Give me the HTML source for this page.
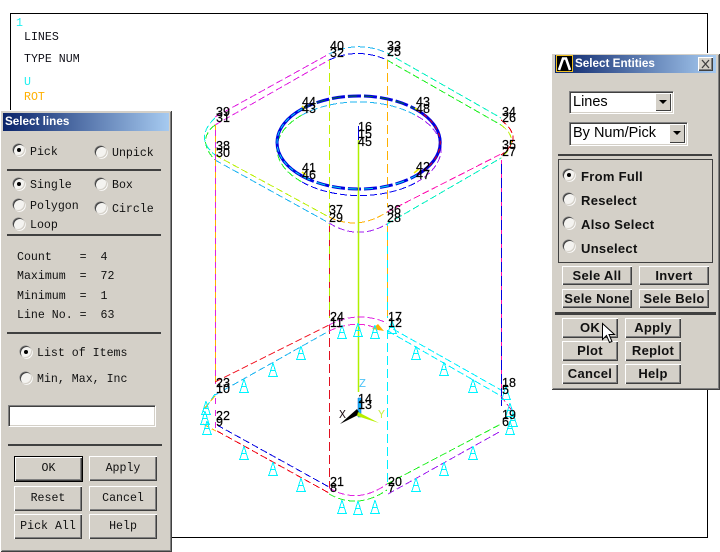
<!DOCTYPE html>
<html><head><meta charset="utf-8">
<style>
html,body{margin:0;padding:0;background:#fff;}
body{width:720px;height:552px;position:relative;overflow:hidden;}
.a{position:absolute;}
.p{position:absolute;background:#d4d0c8;box-shadow:inset 1px 1px 0 #fff,inset -1px -1px 0 #404040,inset 2px 2px 0 #d4d0c8,inset -2px -2px 0 #808080;}
.t{position:absolute;white-space:pre;line-height:12px;height:12px;}
.m{font:11.6px "Liberation Mono",monospace;color:#111;}
.s{font:bold 13px "Liberation Sans",sans-serif;color:#111;letter-spacing:.3px;}
.h{position:absolute;background:#404040;}
.r{position:absolute;width:12px;height:12px;border-radius:50%;background:#f4f3f0;box-shadow:inset 1px 1px 0 #404040,inset -1px -1px 0 #d4d0c8,-.5px -.5px 0 #808080,.7px .7px 0 #fff;}
.r.on:after{content:"";position:absolute;left:4px;top:4px;width:4px;height:4px;border-radius:50%;background:#000;}
.b{position:absolute;background:#d4d0c8;text-align:center;box-shadow:inset 1px 1px 0 #fff,inset -1px -1px 0 #404040,inset -2px -2px 0 #808080;box-sizing:border-box;}
.b.d{outline:1px solid #000;outline-offset:0;}
.m.b{font:11.6px "Liberation Mono",monospace;}
.s.b{font:bold 13px "Liberation Sans",sans-serif;letter-spacing:.3px;}
.title{position:absolute;background:linear-gradient(to right,#0a246a,#a6caf0);color:#fff;font:bold 11.7px "Liberation Sans",sans-serif;}
.c{position:absolute;background:#fff;box-sizing:border-box;box-shadow:inset 1px 1px 0 #808080,inset 2px 2px 0 #404040,inset -1px -1px 0 #d4d0c8,1px 1px 0 #fff;}
.ar{position:absolute;top:2px;right:2px;bottom:2px;width:16px;background:#d4d0c8;box-shadow:inset 1px 1px 0 #fff,inset -1px -1px 0 #404040;}
.ar:after{content:"";position:absolute;left:4px;top:7px;border:4px solid transparent;border-top:4px solid #000;border-bottom:0;}
</style></head>
<body>
<svg class="a" style="left:0;top:0" width="720" height="552" viewBox="0 0 720 552" fill="none">
<defs>
<g id="tw" stroke="#00f4ff" stroke-width="1" fill="none" shape-rendering="crispEdges"><path d="M0-7L-4 6M0-7L4 6M-5 6.5H5M-2.5 0.5H2.5"/></g>
</defs>
<rect x="10.5" y="13.5" width="697" height="524" stroke="#000" shape-rendering="crispEdges"/>
<g stroke-width="1" stroke-dasharray="7 3" shape-rendering="crispEdges">
<path stroke="#e020e0" d="M215 117L329 54M215 125L329 60"/>
<path stroke="#00f0c0" d="M387 53L501 118M387 224L501 158"/>
<path stroke="#20f020" d="M387 60L501 125M215 125Q196 140 215 160"/>
<path stroke="#b8f000" d="M215 155L329 217M501 125Q522 140 501 158"/>
<path stroke="#1eb4f0" d="M215 160L329 223M329 54Q358 40 387 53"/>
<path stroke="#ff10b0" d="M387 212L501 154"/>
<path stroke="#0000f0" d="M329 60Q358 47 387 60"/>
<path stroke="#00f0e0" d="M215 118Q194 138 215 155"/>
<path stroke="#f00010" d="M501 120Q525 138 501 155"/>
<path stroke="#ffb000" d="M329 217Q358 231 387 212"/>
<path stroke="#a020f0" d="M329 223Q358 241 387 224"/>
<path stroke="#c0f000" d="M329.5 60V217" stroke-dasharray="9 4"/>
<path stroke="#ffb000" d="M387.5 60V207" stroke-dasharray="9 4"/>
<path stroke="#1eb4f0" d="M302 115A81.5 46.5 0 0 1 417 116"/>
<path stroke="#20f020" d="M302 115A81.5 46.5 0 0 0 302 182"/>
<path stroke="#0000f0" d="M302 182A81.5 46.5 0 0 0 417 182"/>
<path stroke="#a020f0" d="M417 116A81.5 46.5 0 0 1 417 182"/>
</g>
<!-- hole ellipse -->
<path stroke="#0000e0" stroke-width="3" stroke-dasharray="13 3" d="M302 109A81.5 46.5 0 0 1 417 110"/>
<path stroke="#006a40" stroke-width="1" stroke-dasharray="9 7" d="M302 109A81.5 46.5 0 0 1 417 110"/>
<path stroke="#0000e0" stroke-width="3" d="M302 109A81.5 46.5 0 0 0 302 176"/>
<path stroke="#00e0f0" stroke-width="1" stroke-dasharray="5 3" d="M302 109A81.5 46.5 0 0 0 302 176"/>
<path stroke="#0000e0" stroke-width="3" stroke-dasharray="13 3" d="M302 176A81.5 46.5 0 0 0 417 175"/>
<path stroke="#00e0e0" stroke-width="1" stroke-dasharray="9 7" d="M302 176A81.5 46.5 0 0 0 417 175"/>
<path stroke="#0000e0" stroke-width="3" d="M417 110A81.5 46.5 0 0 1 417 175"/>
<path stroke="#f00010" stroke-width="1" stroke-dasharray="4 4" d="M417 110A81.5 46.5 0 0 1 417 175"/>
<path stroke="#f0f000" stroke-width="1.5" d="M302 106l3 3M302 172l4 3M415 108l4 3M414 173l5-4"/>
<!-- verticals -->
<g stroke-width="1" shape-rendering="crispEdges">
<path stroke="#ffb000" d="M215.5 125V384"/>
<path stroke="#e020e0" stroke-dasharray="6 6" d="M215.5 130V384M215.5 398V428"/>
<path stroke="#0000e0" d="M501.5 160V406"/>
<path stroke="#ff10b0" stroke-dasharray="4 10" d="M501.5 160V390"/>
<path stroke="#b0f000" d="M329.5 224V318"/>
<path stroke="#e01020" stroke-dasharray="6 8" d="M329.5 226V318"/>
<path stroke="#00f0ff" d="M387.5 224V318"/>
<path stroke="#ffb000" stroke-dasharray="6 8" d="M387.5 226V318"/>
<path stroke="#e01020" stroke-dasharray="9 4" d="M329.5 325V488"/>
<path stroke="#00f0ff" stroke-dasharray="9 4" d="M387.5 330V485"/>
</g>
<path stroke="#b0f000" stroke-width="1.5" d="M358.5 140V392"/>
<path stroke="#0000e0" d="M358.5 126V140"/>
<!-- lower shell -->
<g stroke-width="1" stroke-dasharray="7 3" shape-rendering="crispEdges">
<path stroke="#f00010" d="M215 382L329 325M217 431L329 493"/>
<path stroke="#1eb4f0" d="M215 395L329 331"/>
<path stroke="#0000e0" d="M217 425L329 487"/>
<path stroke="#e020e0" d="M329 325Q358 310 387 323M329 488Q358 505 387 484"/>
<path stroke="#f020d0" d="M329 331Q358 318 380 330"/>
<path stroke="#20f020" d="M329 494Q358 510 387 490M387 484L501 424"/>
<path stroke="#a020f0" d="M388 494L501 431"/>
<path stroke="#00f0ff" d="M393 329L501 390M388 331L501 396M215 394L203 412"/>
<path stroke="#ffb000" d="M215 396L203 410M203 424L216 431"/>
<path stroke="#e020a0" d="M501 396L513 412"/>
</g>
<path fill="#ffb000" d="M372 329l6-5 6 7z"/>
<!-- constraint symbols -->
<g>
<use href="#tw" x="342" y="332"/><use href="#tw" x="358" y="330"/><use href="#tw" x="375" y="332"/>
<use href="#tw" x="301" y="353"/><use href="#tw" x="273" y="370"/><use href="#tw" x="244" y="386"/>
<use href="#tw" x="206" y="408"/><use href="#tw" x="205" y="418"/><use href="#tw" x="207" y="428"/>
<use href="#tw" x="244" y="453"/><use href="#tw" x="273" y="469"/><use href="#tw" x="301" y="485"/>
<use href="#tw" x="342" y="507"/><use href="#tw" x="358" y="508"/><use href="#tw" x="375" y="507"/>
<use href="#tw" x="416" y="353"/><use href="#tw" x="444" y="369"/><use href="#tw" x="473" y="386"/>
<use href="#tw" x="506" y="393"/><use href="#tw" x="510" y="410"/><use href="#tw" x="513" y="420"/>
<use href="#tw" x="510" y="428"/><use href="#tw" x="473" y="453"/><use href="#tw" x="444" y="469"/>
<use href="#tw" x="416" y="485"/><use href="#tw" x="392" y="327"/>
</g>
<!-- triad -->
<path fill="#1eb4f0" stroke="#0060e0" stroke-width=".5" d="M358 398h3v19h-3z"/>
<path fill="#000" d="M340 424L357 409l3 5z"/>
<path fill="#b8f000" d="M358 412l21 11-22-7z"/>
<g font-family="'Liberation Sans',sans-serif" font-size="12.5" fill="#000" stroke="#000" stroke-width=".2">
<text x="330" y="50">40</text><text x="330" y="57">32</text>
<text x="387" y="50">33</text><text x="387" y="56">25</text>
<text x="216" y="116">39</text><text x="216" y="122">31</text>
<text x="216" y="150">38</text><text x="216" y="157">30</text>
<text x="302" y="106">44</text><text x="302" y="113">43</text>
<text x="302" y="172">41</text><text x="302" y="179">46</text>
<text x="416" y="106">43</text><text x="416" y="113">48</text>
<text x="416" y="171">42</text><text x="416" y="179">47</text>
<text x="329" y="214">37</text><text x="329" y="222">29</text>
<text x="387" y="214">36</text><text x="387" y="222">28</text>
<text x="358" y="131">16</text><text x="358" y="138">15</text><text x="358" y="146">45</text>
<text x="502" y="116">34</text><text x="502" y="122">26</text>
<text x="502" y="149">35</text><text x="502" y="156">27</text>
<text x="330" y="321">24</text><text x="330" y="327">11</text>
<text x="388" y="321">17</text><text x="388" y="327">12</text>
<text x="216" y="387">23</text><text x="216" y="393">10</text>
<text x="216" y="420">22</text><text x="216" y="426">9</text>
<text x="502" y="387">18</text><text x="502" y="394">5</text>
<text x="502" y="419">19</text><text x="502" y="426">6</text>
<text x="330" y="486">21</text><text x="330" y="492">8</text>
<text x="388" y="486">20</text><text x="388" y="492">7</text>
<text x="358" y="403">14</text><text x="358" y="409">13</text>
</g>
<g font-family="'Liberation Mono',monospace" font-size="11.6">
<text x="359" y="387" fill="#4fc3f7">Z</text>
<text x="339" y="418" fill="#201018">X</text>
<text x="378" y="418" fill="#c8f040">Y</text>
<text x="24" y="40" fill="#101018">LINES</text>
<text x="24" y="62" fill="#101018">TYPE NUM</text>
<text x="24" y="85" fill="#20f0f0">U</text>
<text x="24" y="100" fill="#ffb000">ROT</text>
<text x="16" y="26" fill="#20f0f0">1</text>
</g>
</svg>

<!-- Left panel -->
<div class="p" style="left:0;top:110px;width:172px;height:442px"></div>
<div class="title" style="left:3px;top:113px;width:166px;height:18px;line-height:18px;text-indent:2px">Select lines</div>
<div class="r on" style="left:13px;top:144px"></div><div class="t m" style="left:30px;top:146px">Pick</div>
<div class="r" style="left:95px;top:146px"></div><div class="t m" style="left:112px;top:147px">Unpick</div>
<div class="h" style="left:7px;top:169px;width:154px;height:2px"></div>
<div class="r on" style="left:13px;top:178px"></div><div class="t m" style="left:30px;top:179px">Single</div>
<div class="r" style="left:95px;top:178px"></div><div class="t m" style="left:112px;top:179px">Box</div>
<div class="r" style="left:13px;top:199px"></div><div class="t m" style="left:30px;top:200px">Polygon</div>
<div class="r" style="left:95px;top:202px"></div><div class="t m" style="left:112px;top:203px">Circle</div>
<div class="r" style="left:13px;top:218px"></div><div class="t m" style="left:30px;top:219px">Loop</div>
<div class="h" style="left:7px;top:234px;width:154px;height:2px"></div>
<div class="t m" style="left:17px;top:251px">Count    =  4</div>
<div class="t m" style="left:17px;top:270px">Maximum  =  72</div>
<div class="t m" style="left:17px;top:290px">Minimum  =  1</div>
<div class="t m" style="left:17px;top:309px">Line No. =  63</div>
<div class="h" style="left:7px;top:332px;width:154px;height:2px"></div>
<div class="r on" style="left:20px;top:346px"></div><div class="t m" style="left:37px;top:347px">List of Items</div>
<div class="r" style="left:20px;top:372px"></div><div class="t m" style="left:37px;top:373px">Min, Max, Inc</div>
<div class="c" style="left:8px;top:405px;width:147px;height:21px"></div>
<div class="h" style="left:8px;top:444px;width:154px;height:2px"></div>
<div class="b m d" style="left:15px;top:457px;width:67px;height:24px;line-height:23px">OK</div>
<div class="b m" style="left:89px;top:456px;width:68px;height:25px;line-height:25px">Apply</div>
<div class="b m" style="left:14px;top:486px;width:68px;height:25px;line-height:25px">Reset</div>
<div class="b m" style="left:89px;top:486px;width:68px;height:25px;line-height:25px">Cancel</div>
<div class="b m" style="left:14px;top:514px;width:68px;height:25px;line-height:25px">Pick All</div>
<div class="b m" style="left:89px;top:514px;width:68px;height:25px;line-height:25px">Help</div>

<!-- Right panel -->
<div class="p" style="left:551px;top:53px;width:169px;height:337px"></div>
<div class="title" style="left:555px;top:55px;width:161px;height:18px;line-height:18px;text-indent:20px">Select Entities</div>
<svg class="a" style="left:556px;top:55px" width="17" height="17" viewBox="0 0 17 17"><rect width="17" height="17" fill="#f0c020"/><rect x="1" y="1" width="15" height="15" fill="#000"/><path d="M3 15L7 3.5h3L14 15" stroke="#fff" stroke-width="2.6" fill="none"/></svg>
<div class="b" style="left:698px;top:57px;width:15px;height:14px"></div>
<svg class="a" style="left:698px;top:57px" width="15" height="14"><path d="M4 3l7 8M11 3l-7 8" stroke="#404040" stroke-width="1.3"/></svg>
<div class="c" style="left:569px;top:91px;width:104px;height:22px;line-height:22px;padding-left:4px;font:14.5px/22px 'Liberation Sans',sans-serif;color:#000">Lines<div class="ar"></div></div>
<div class="c" style="left:569px;top:122px;width:118px;height:23px;line-height:23px;padding-left:4px;font:14.5px/23px 'Liberation Sans',sans-serif;color:#000">By Num/Pick<div class="ar"></div></div>
<div class="h" style="left:558px;top:154px;width:154px;height:2px"></div>
<div class="a" style="left:558px;top:159px;width:153px;height:102px;border:1px solid #404040"></div>
<div class="r on" style="left:563px;top:169px"></div><div class="t s" style="left:581px;top:169px">From Full</div>
<div class="r" style="left:563px;top:193px"></div><div class="t s" style="left:581px;top:193px">Reselect</div>
<div class="r" style="left:563px;top:217px"></div><div class="t s" style="left:581px;top:217px">Also Select</div>
<div class="r" style="left:563px;top:240px"></div><div class="t s" style="left:581px;top:241px">Unselect</div>
<div class="b s" style="left:562px;top:266px;width:70px;height:19px;line-height:19px">Sele All</div>
<div class="b s" style="left:639px;top:266px;width:70px;height:19px;line-height:19px">Invert</div>
<div class="b s" style="left:562px;top:289px;width:70px;height:19px;line-height:19px">Sele None</div>
<div class="b s" style="left:639px;top:289px;width:70px;height:19px;line-height:19px">Sele Belo</div>
<div class="h" style="left:555px;top:312px;width:161px;height:3px"></div>
<div class="b s" style="left:562px;top:318px;width:56px;height:20px;line-height:20px">OK</div>
<div class="b s" style="left:625px;top:318px;width:56px;height:20px;line-height:20px">Apply</div>
<div class="b s" style="left:562px;top:341px;width:56px;height:20px;line-height:20px">Plot</div>
<div class="b s" style="left:625px;top:341px;width:56px;height:20px;line-height:20px">Replot</div>
<div class="b s" style="left:562px;top:364px;width:56px;height:20px;line-height:20px">Cancel</div>
<div class="b s" style="left:625px;top:364px;width:56px;height:20px;line-height:20px">Help</div>
<svg class="a" style="left:600px;top:321px" width="16" height="24"><path d="M2.5 2.5V18.5L6.5 14.5L9.5 21.5L12 20.5L9 13.5H14.5Z" fill="#fff" stroke="#000" stroke-width="1"/></svg>
</body></html>
